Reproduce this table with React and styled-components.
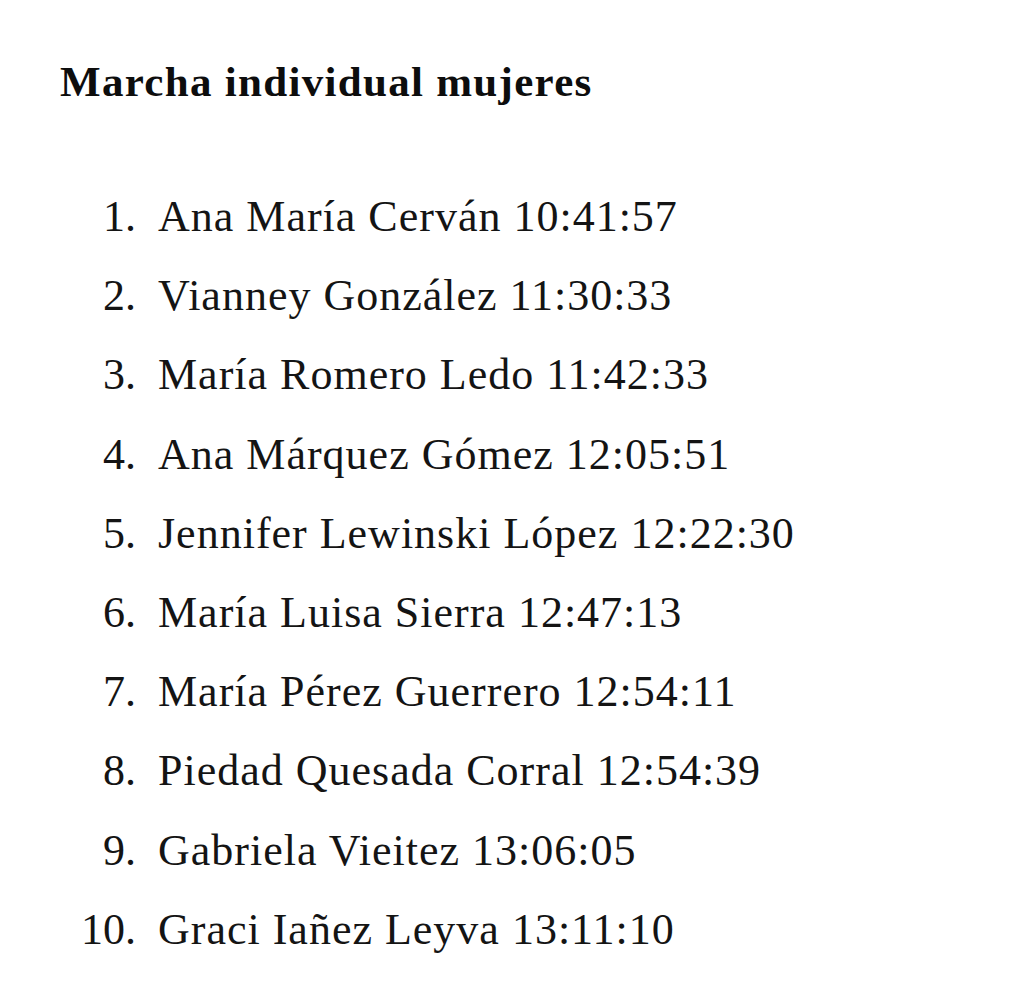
import styled, { createGlobalStyle } from 'styled-components';

const GlobalStyle = createGlobalStyle`
  body {
    margin: 0;
    background: #ffffff;
    color: #111111;
    font-family: "Liberation Serif", "DejaVu Serif", serif;
  }
`;

const Page = styled.div`
  padding: 61px 0 40px 60px;
`;

const Title = styled.h1`
  margin: 0;
  font-size: 43px;
  line-height: 42px;
  font-weight: 700;
  letter-spacing: 1.3px;
  color: #0d0d0d;
`;

const List = styled.ol`
  list-style: none;
  margin: 74px 0 0;
  padding: 0;
  display: flex;
  flex-direction: column;
`;

const Row = styled.li`
  display: flex;
  align-items: baseline;
  gap: 22px;
  height: 79.2px;
  line-height: 79.2px;
  font-size: 44px;
  letter-spacing: 1px;
  color: #141414;
`;

const Num = styled.span`
  width: 76px;
  text-align: right;
  flex-shrink: 0;
  letter-spacing: 0;
`;

const results = [
  ['Ana María Cerván', '10:41:57'],
  ['Vianney González', '11:30:33'],
  ['María Romero Ledo', '11:42:33'],
  ['Ana Márquez Gómez', '12:05:51'],
  ['Jennifer Lewinski López', '12:22:30'],
  ['María Luisa Sierra', '12:47:13'],
  ['María Pérez Guerrero', '12:54:11'],
  ['Piedad Quesada Corral', '12:54:39'],
  ['Gabriela Vieitez', '13:06:05'],
  ['Graci Iañez Leyva', '13:11:10'],
];

export default function App() {
  return (
    <>
      <GlobalStyle />
      <Page>
        <Title>Marcha individual mujeres</Title>
        <List>
          {results.map(([name, time], i) => (
            <Row key={name}>
              <Num>{i + 1}.</Num>
              <span>
                {name} {time}
              </span>
            </Row>
          ))}
        </List>
      </Page>
    </>
  );
}
